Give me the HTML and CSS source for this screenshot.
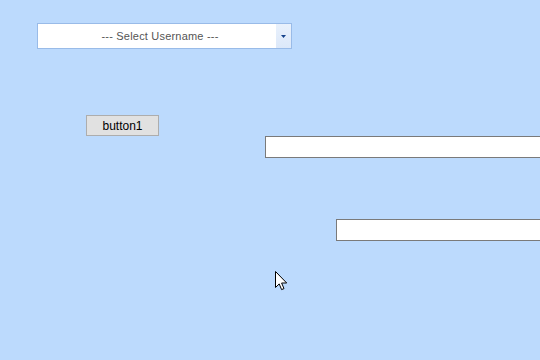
FILE: index.html
```html
<!DOCTYPE html>
<html lang="en">
<head>
    <meta charset="UTF-8">
    <meta name="viewport" content="width=device-width, initial-scale=1.0">
    <title>Login</title>
    <link rel="stylesheet" href="styles.css">
</head>
<body>
    <div class="page">
        <div class="combo">
            <div class="combo-text">--- Select Username ---</div>
            <div class="combo-btn">
                <svg width="5" height="3" viewBox="0 0 5 3"><path d="M0 0h5L2.5 3z" fill="#15428b"/></svg>
            </div>
        </div>

        <button class="btn" type="button">button1</button>

        <input class="field field-one" type="text">
        <input class="field field-two" type="text">
    </div>

    <!-- mouse pointer from the capture -->
    <svg class="pointer" width="13" height="20" viewBox="0 0 13 20">
        <path d="M0.5 0.5V16.5L4.2 12.9L6.6 18.6L9 17.6L6.6 12H11.7Z" fill="#fff" stroke="#000" stroke-width="1"/>
    </svg>
</body>
</html>
```

FILE: styles.css
```css
body {
    margin: 0;
    background-color: #bcdafd;
    font-family: "Liberation Sans", Arial, sans-serif;
    overflow: hidden;
    height: 360px;
}

.page {
    padding-top: 23px;
}

.combo {
    display: flex;
    width: 255px;
    height: 26px;
    margin-left: 37px;
    border: 1px solid #99bbe8;
    background-color: #fff;
    box-sizing: border-box;
}

.combo-text {
    flex: 1;
    display: flex;
    align-items: center;
    justify-content: center;
    font-size: 11px;
    letter-spacing: 0.2px;
    color: #555;
    padding-left: 6px;
}

.combo-btn {
    width: 15px;
    display: flex;
    align-items: center;
    justify-content: center;
    background: linear-gradient(#e9f1fc, #dce8f9);
}

.btn {
    display: block;
    margin: 66px 0 0 86px;
    width: 73px;
    height: 21px;
    padding: 0;
    font-family: "Liberation Sans", Arial, sans-serif;
    font-size: 12px;
    color: #000;
    background-color: #e1e1e1;
    border: 1px solid #adadad;
    border-radius: 0;
}

/* the text boxes run on past the right edge of the window */
.field {
    display: block;
    height: 22px;
    padding: 0;
    border: 1px solid #7a7a7a;
    border-right: none;
    background-color: #fff;
    box-sizing: border-box;
}

.field-one {
    width: 275px;
    margin: 0 0 0 265px;
}

.field-two {
    width: 204px;
    margin: 61px 0 0 336px;
}

.pointer {
    position: absolute;
    left: 275px;
    top: 271px;
}
```
